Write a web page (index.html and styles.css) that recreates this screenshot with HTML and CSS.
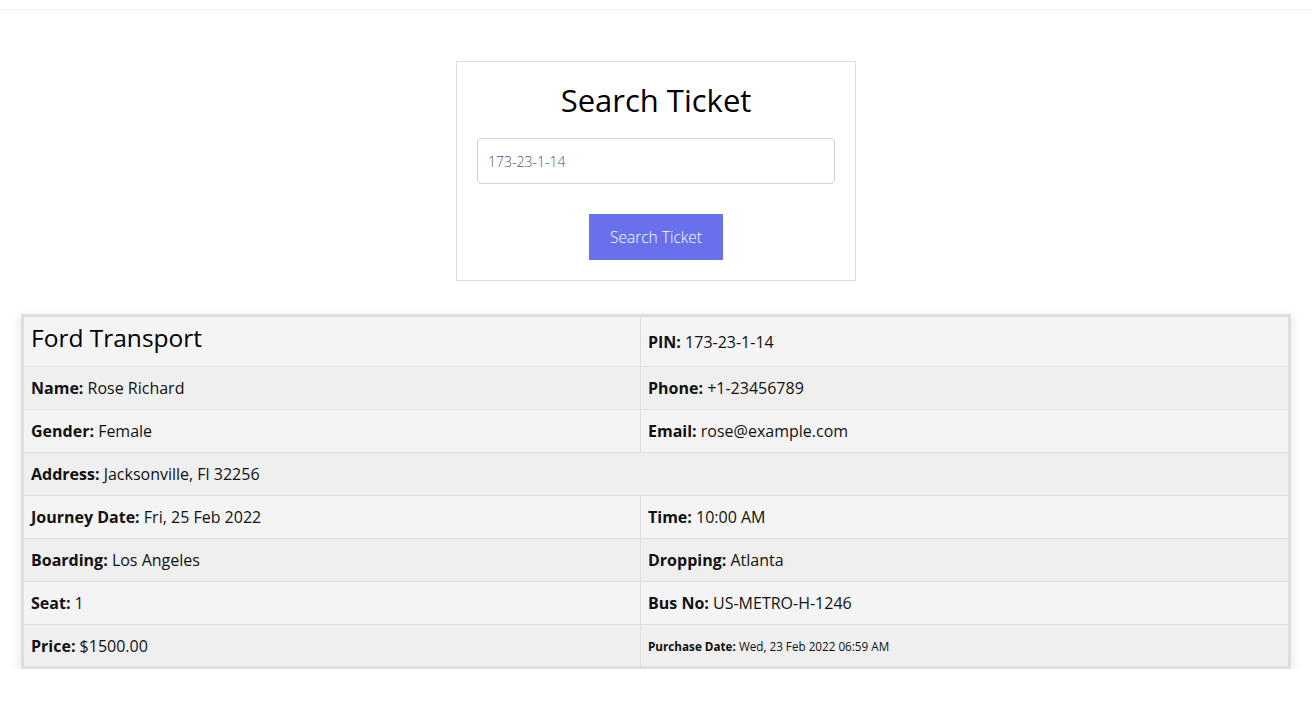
FILE: index.html
```html
<!DOCTYPE html>
<html lang="en">
<head>
<meta charset="utf-8">
<title>Search Ticket</title>
<link rel="stylesheet" href="styles.css">
</head>
<body>
<header class="topbar"></header>
<main class="page">
  <section class="search-card">
    <h1 class="search-title">Search Ticket</h1>
    <input class="search-input" type="text" value="173-23-1-14">
    <div class="search-actions">
      <button class="search-btn" type="button">Search Ticket</button>
    </div>
  </section>

  <div class="ticket-wrap">
    <table class="ticket">
      <tbody>
        <tr class="head-row">
          <td class="col-left"><h2 class="company">Ford Transport</h2></td>
          <td><b>PIN:</b> 173-23-1-14</td>
        </tr>
        <tr>
          <td><b>Name:</b> Rose Richard</td>
          <td><b>Phone:</b> +1-23456789</td>
        </tr>
        <tr>
          <td><b>Gender:</b> Female</td>
          <td><b>Email:</b> rose@example.com</td>
        </tr>
        <tr>
          <td colspan="2"><b>Address:</b> Jacksonville, Fl 32256</td>
        </tr>
        <tr>
          <td><b>Journey Date:</b> Fri, 25 Feb 2022</td>
          <td><b>Time:</b> 10:00 AM</td>
        </tr>
        <tr>
          <td><b>Boarding:</b> Los Angeles</td>
          <td><b>Dropping:</b> Atlanta</td>
        </tr>
        <tr>
          <td><b>Seat:</b> 1</td>
          <td><b>Bus No:</b> US-METRO-H-1246</td>
        </tr>
        <tr>
          <td><b>Price:</b> $1500.00</td>
          <td class="small"><b>Purchase Date:</b> Wed, 23 Feb 2022 06:59 AM</td>
        </tr>
      </tbody>
    </table>
  </div>
</main>
</body>
</html>
```

FILE: styles.css
```css
* { box-sizing: border-box; }
html, body { margin: 0; padding: 0; }
body {
  font-family: "Open Sans", Lato, sans-serif;
  color: #111;
  background: #fff;
}
.topbar {
  height: 10px;
  border-bottom: 1px solid #f2f2f2;
  background: #fff;
}
.page {
  display: flex;
  flex-direction: column;
  align-items: center;
  padding: 51px 21px 0;
}
.search-card {
  width: 400px;
  border: 1px solid #dcdcdc;
  padding: 20px 20px 20px;
  display: flex;
  flex-direction: column;
}
.search-title {
  margin: 0 0 20px;
  font-size: 31px;
  font-weight: 500;
  text-align: center;
  line-height: 36px;
  color: #000;
}
.search-input {
  height: 46px;
  width: 100%;
  border: 1px solid #d1d5db;
  border-radius: 4px;
  padding: 0 10px;
  font-family: inherit;
  font-size: 14px;
  font-weight: 300;
  color: #4b5563;
  outline: none;
}
.search-actions {
  display: flex;
  justify-content: center;
  margin-top: 30px;
}
.search-btn {
  width: 134px;
  height: 46px;
  border: none;
  background: #6970ec;
  color: #fff;
  font-family: inherit;
  font-size: 15.5px;
  font-weight: 300;
}
.ticket-wrap {
  margin-top: 33px;
  width: 100%;
  box-shadow: 0 3px 10px rgba(0,0,0,0.12);
}
.ticket {
  width: 100%;
  border-collapse: collapse;
  border: 3px solid #dedede;
  font-size: 16px;
}
.ticket td {
  border: 1px solid #dedede;
  height: 43px;
  padding: 0 8px 0 7px;
  vertical-align: middle;
  color: #111;
  font-weight: 400;
}
.ticket tr:nth-child(odd) td { background: #f4f4f4; }
.ticket tr:nth-child(even) td { background: #efefef; }
.ticket .head-row td { height: 51px; }
.col-left { width: 618px; }
.company {
  margin: 0 0 8px;
  font-size: 24.5px;
  font-weight: 500;
  color: #000;
}
.ticket b { font-weight: 700; }
.ticket .small { font-size: 11.7px; }
```
